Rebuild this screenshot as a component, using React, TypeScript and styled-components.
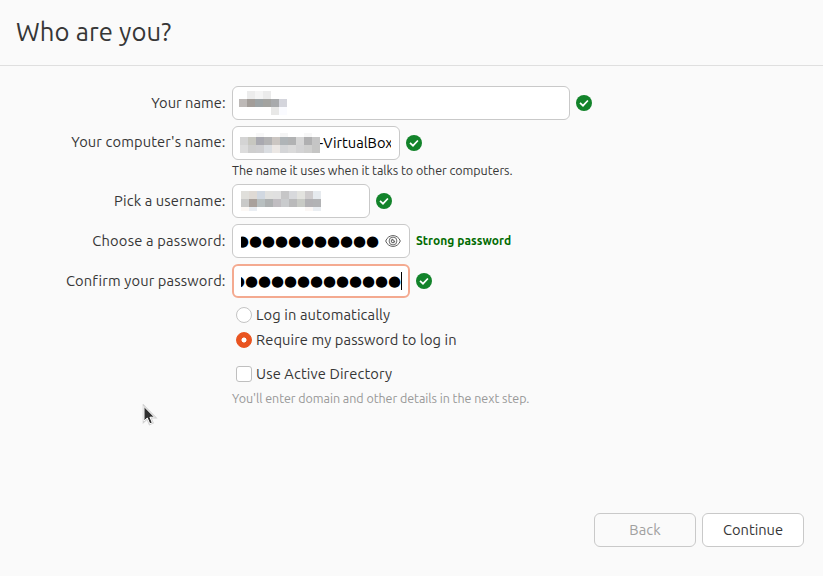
import React from "react";
import styled, { createGlobalStyle } from "styled-components";

const GlobalStyle = createGlobalStyle`
  * { box-sizing: border-box; }
  body { margin: 0; background: #fafafa; }
`;

const Window = styled.main`
  position: relative;
  display: flex;
  flex-direction: column;
  width: 823px;
  height: 576px;
  overflow: hidden;
  background: #fafafa;
  color: #363636;
  font: 14.67px/20px "Ubuntu", "Noto Sans", sans-serif;
  white-space: nowrap;
`;

const Header = styled.header`
  height: 66px;
  flex: none;
  padding: 16px 16px 0;
  border-bottom: 1px solid #dfdfdf;
`;

const Title = styled.h1`
  margin: 0;
  font-size: 25.67px;
  line-height: 32px;
  font-weight: 400;
  letter-spacing: 0.1px;
`;

const Form = styled.form`
  display: flex;
  flex-direction: column;
  gap: 6px;
  padding-top: 20px;
`;

const Row = styled.div`
  display: grid;
  grid-template-columns: 226px auto;
  column-gap: 6px;
`;

const Label = styled.label<{ $track: number; $lineHeight?: number }>`
  height: 34px;
  line-height: ${(p) => p.$lineHeight ?? 34}px;
  padding-right: 0.4px;
  text-align: right;
  letter-spacing: ${(p) => p.$track}px;
`;

const FieldLine = styled.div`
  display: flex;
  align-items: center;
  gap: 6px;
  height: 34px;
`;

const Field = styled.div<{ $width: number; $focused?: boolean }>`
  display: flex;
  align-items: center;
  width: ${(p) => p.$width}px;
  height: 34px;
  padding: 0 ${(p) => (p.$focused ? 6 : 8)}px 0 ${(p) => (p.$focused ? 7 : 8)}px;
  border: ${(p) => (p.$focused ? "2px solid #f4aa90" : "1px solid #c9c9c9")};
  border-radius: 6px;
  background: #fff;
  color: #000;
  overflow: hidden;
`;

const Hint = styled.p<{ $muted?: boolean }>`
  margin: ${(p) => (p.$muted ? "8px 0 0" : "2px 0 0")};
  height: 16px;
  font-size: 12.5px;
  line-height: 17px;
  letter-spacing: ${(p) => (p.$muted ? -0.05 : -0.04)}px;
  color: ${(p) => (p.$muted ? "#989898" : "#363636")};
`;

const Mosaic = styled.div<{ $columns: number; $rows: string; $offset?: number }>`
  display: grid;
  flex: none;
  grid-template-columns: repeat(${(p) => p.$columns}, 8px);
  grid-template-rows: ${(p) => p.$rows};
  margin-left: ${(p) => p.$offset ?? 0}px;
`;

const Cell = styled.i<{ $color: string }>`
  background: ${(p) => p.$color};
`;

const HostClip = styled.span`
  flex: 1;
  overflow: hidden;
  line-height: 24px;
  text-indent: -1px;
`;

const DotsClip = styled.div<{ $width: number }>`
  display: flex;
  justify-content: flex-end;
  flex: none;
  width: ${(p) => p.$width}px;
  height: 24px;
  overflow: hidden;
`;

const Dots = styled.span`
  flex: none;
  font: 15px/24px "DejaVu Sans", sans-serif;
  letter-spacing: -0.09px;
`;

const Caret = styled.i`
  width: 1px;
  height: 18px;
  flex: none;
  background: #000;
`;

const Strength = styled.strong`
  font-size: 12px;
  letter-spacing: 0.04px;
  color: #006a00;
`;

const EyeIcon = styled.svg`
  width: 16px;
  height: 14px;
  flex: none;
  margin-left: 6px;
`;

const Badge = styled.svg`
  width: 16px;
  height: 16px;
  flex: none;
`;

const Options = styled.div`
  padding: 3px 0 0 232px;
`;

const Option = styled.label<{ $track: number; $top?: number }>`
  display: flex;
  align-items: center;
  gap: 4px;
  height: 16px;
  margin: ${(p) => p.$top ?? 0}px 0 0 4px;
  letter-spacing: ${(p) => p.$track}px;
`;

const Radio = styled.span<{ $checked?: boolean }>`
  width: 16px;
  height: 16px;
  border-radius: 50%;
  border: 1px solid ${(p) => (p.$checked ? "#e95420" : "#c4c4c4")};
  background: ${(p) =>
    p.$checked ? "radial-gradient(circle, #fff 2.1px, #e95420 2.9px)" : "#fff"};
  background-origin: border-box;
`;

const Checkbox = styled.span`
  width: 16px;
  height: 16px;
  border-radius: 3px;
  border: 1px solid #bfbfbf;
  background: #fff;
`;

const Footer = styled.footer`
  display: flex;
  justify-content: flex-end;
  gap: 6px;
  margin-top: auto;
  padding: 0 19px 29px 0;
`;

const Button = styled.button<{ $track: number }>`
  width: 102px;
  height: 34px;
  padding: 0;
  border: 1px solid #c9c9c9;
  border-radius: 6px;
  background: #fff;
  color: #363636;
  font: inherit;
  letter-spacing: ${(p) => p.$track}px;
  &:disabled { background: #fafafa; color: #a0a0a0; }
`;

const Pointer = styled.svg`
  position: absolute;
  left: 142px;
  top: 404px;
  width: 16px;
  height: 24px;
`;

const Valid = () => (
  <Badge viewBox="0 0 16 16">
    <circle cx="8" cy="8" r="8" fill="#12832a" />
    <path d="M4 7.8 7 10.7 11.9 5.5" fill="none" stroke="#fff" strokeWidth="1.7" />
  </Badge>
);

const Eye = () => (
  <EyeIcon viewBox="0 0 16 14" fill="none" stroke="#5c5c5c">
    <path d="M.7 7C3.2-.2 12.8-.2 15.3 7 12.8 14.2 3.2 14.2.7 7Z" strokeWidth="1" />
    <circle cx="8" cy="7" r="3.9" strokeWidth="0.9" />
    <path d="M8 5.2A1.8 1.8 0 1 0 9.8 7H8Z" strokeWidth="1" />
  </EyeIcon>
);

const nameCells = [
  "#fff", "#ececec", "#f4f4f4", "#ebebeb", "#fff", "#fff",
  "#bdb9b7", "#a29d99", "#9da3a5", "#a3a3a0", "#a8aaac", "#d4d5dc",
  "#fff", "#fff", "#fff", "#fff", "#e8e8e7", "#fafbff",
];
const hostCells = [
  "#fff", "#fff", "#f8f8f8", "#fff", "#fff", "#f5f5f5", "#fff", "#fff", "#f7f7f7", "#fff",
  "#d4d4d4", "#c7c7c0", "#a9a9b0", "#b3b3b4", "#cbc6c2", "#afb4b7", "#b1b2b3", "#d5d5d5", "#b0b0b1", "#c5c5c5",
  "#dcdcdc", "#cecece", "#cfcfd1", "#dadde1", "#ebe7e4", "#d4d5d7", "#dadada", "#d3d3d4", "#cfcfce", "#c5c5c4",
];
const userCells = [
  "#e0dfdb", "#dfdad5", "#d1d8e1", "#e1e1df", "#e0e0e0", "#c6c6c7", "#d8d9dc", "#e3e3df", "#cfcccd", "#e6eaee",
  "#c9c9c8", "#a9a19c", "#b8bfc0", "#adb0b1", "#c0bdc1", "#c9cbcd", "#bababb", "#c8cac5", "#b2b1b4", "#b2b3b5",
  "#fcf8f5", "#eaeef3", "#fff", "#fff", "#fff", "#fff", "#fff", "#fff", "#fbf7f5", "#eaeef2",
];

const cells = (colors: string[]) => colors.map((color, i) => <Cell key={i} $color={color} />);

export default function App() {
  return (
    <Window>
      <GlobalStyle />
      <Header>
        <Title>Who are you?</Title>
      </Header>
      <Form>
        <Row>
          <Label $track={0.05}>Your name:</Label>
          <FieldLine>
            <Field $width={338}>
              <Mosaic $columns={6} $rows="8px 8px 8px" $offset={-2}>{cells(nameCells)}</Mosaic>
            </Field>
            <Valid />
          </FieldLine>
        </Row>
        <Row>
          <Label $track={0.14} $lineHeight={32}>Your computer's name:</Label>
          <div>
            <FieldLine>
              <Field $width={168}>
                <Mosaic $columns={10} $rows="4px 8px 8px" $offset={-1}>{cells(hostCells)}</Mosaic>
                <HostClip>-VirtualBox</HostClip>
              </Field>
              <Valid />
            </FieldLine>
            <Hint>The name it uses when it talks to other computers.</Hint>
          </div>
        </Row>
        <Row>
          <Label $track={0.13}>Pick a username:</Label>
          <FieldLine>
            <Field $width={138}>
              <Mosaic $columns={10} $rows="8px 8px 4px">{cells(userCells)}</Mosaic>
            </Field>
            <Valid />
          </FieldLine>
        </Row>
        <Row>
          <Label $track={0.2}>Choose a password:</Label>
          <FieldLine>
            <Field $width={178}>
              <DotsClip $width={138}><Dots>●●●●●●●●●●●●</Dots></DotsClip>
              <Eye />
            </Field>
            <Strength>Strong password</Strength>
          </FieldLine>
        </Row>
        <Row>
          <Label $track={0.14}>Confirm your password:</Label>
          <FieldLine>
            <Field $width={178} $focused>
              <DotsClip $width={160}><Dots>●●●●●●●●●●●●●●</Dots></DotsClip>
              <Caret />
            </Field>
            <Valid />
          </FieldLine>
        </Row>
        <Options>
          <Option $track={0.12}><Radio />Log in automatically</Option>
          <Option $track={0.1} $top={9}><Radio $checked />Require my password to log in</Option>
          <Option $track={0.13} $top={18}><Checkbox />Use Active Directory</Option>
          <Hint $muted>You'll enter domain and other details in the next step.</Hint>
        </Options>
      </Form>
      <Footer>
        <Button $track={0.1} disabled>Back</Button>
        <Button $track={0}>Continue</Button>
      </Footer>
      <Pointer viewBox="0 0 16 24">
        <path d="M2 2.5V17L5.3 14 7.8 19.8 10.3 18.7 7.9 13.2H12.5Z" fill="#2f2f2f" stroke="#d2d2d2" strokeWidth="2.6" />
        <path d="M2 2.5V17L5.3 14 7.8 19.8 10.3 18.7 7.9 13.2H12.5Z" fill="#2f2f2f" stroke="#fff" strokeWidth="1" />
      </Pointer>
    </Window>
  );
}
